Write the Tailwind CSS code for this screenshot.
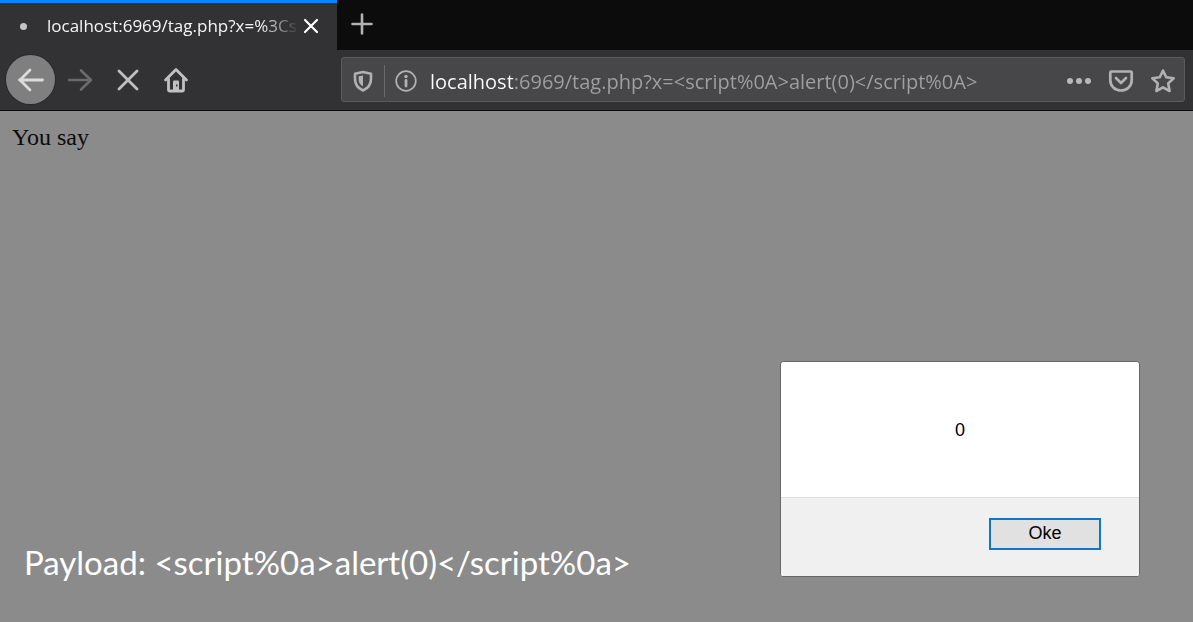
<!doctype html>
<html lang="en">
<head>
  <meta charset="UTF-8">
  <meta name="viewport" content="width=device-width, initial-scale=1.0">
  <title>localhost:6969/tag.php</title>
  <script src="https://cdn.jsdelivr.net/npm/@tailwindcss/browser@4"></script>
</head>
<body class="flex min-h-screen flex-col bg-[#8b8b8b] font-['Open_Sans','Noto_Sans',sans-serif]">
    <header class="border-b border-[#0c0c0d] bg-[#323234]">
        <!-- tab strip -->
        <div class="flex h-[50px] bg-[#0c0c0d]">
            <div class="flex w-[337px] items-center border-t-3 border-[#0a84ff] bg-[#323234] pb-px pl-5 pr-[17px]">
                <span class="size-[7px] shrink-0 rounded-full bg-[#c4c4c5]"></span>
                <span class="ml-5 flex-1 overflow-hidden whitespace-nowrap text-[17px] leading-6 text-[#f5f5f6] mask-r-from-[214px] mask-r-to-[252px]">localhost:6969/tag.php?x=%3Cs</span>
                <button type="button" aria-label="Close tab" class="shrink-0">
                    <svg class="size-[18px]" viewBox="0 0 18 18" fill="none" stroke="#fff" stroke-width="2.2" stroke-linecap="round"><path d="M3 3l12 12M15 3L3 15"/></svg>
                </button>
            </div>
            <button type="button" aria-label="New tab" class="ml-[13px] flex items-center pb-0.5">
                <svg class="size-6" viewBox="0 0 24 24" fill="none" stroke="#b1b1b3" stroke-width="2.6" stroke-linecap="round"><path d="M12 2.5v19M2.5 12h19"/></svg>
            </button>
        </div>

        <!-- toolbar -->
        <div class="flex h-[60px] items-center pb-px pl-[6px] pr-2">
            <button type="button" aria-label="Back" class="flex size-[49px] items-center justify-center rounded-full bg-[#7f7f80] ring-1 ring-[#29292b]">
                <svg class="size-7" viewBox="0 0 28 28" fill="none" stroke="#dcdcdd" stroke-width="2.8" stroke-linecap="round" stroke-linejoin="round"><path d="M2.500 14h23M13 4L3 14l10 10"/></svg>
            </button>
            <button type="button" aria-label="Forward" disabled class="ml-3">
                <svg class="size-[26px]" viewBox="0 0 26 26" fill="none" stroke="#6a6a6c" stroke-width="2.6" stroke-linecap="round" stroke-linejoin="round"><path d="M2 13h22M14 3.500l10 9.500l-10 9.500"/></svg>
            </button>
            <button type="button" aria-label="Stop" class="ml-[22px]">
                <svg class="size-[26px]" viewBox="0 0 26 26" fill="none" stroke="#c0c0c2" stroke-width="2.8" stroke-linecap="round"><path d="M4 4l18 18M22 4L4 22"/></svg>
            </button>
            <button type="button" aria-label="Home" class="ml-[22px]">
                <svg class="size-[26px]" viewBox="0 0 26 26" fill="none" stroke="#c0c0c2" stroke-width="2.8" stroke-linecap="round" stroke-linejoin="round"><path d="M2.500 13L13 2.500L23.500 13"/><path d="M5.500 12v10.500q0 1.500 1.500 1.500h12q1.500 0 1.500-1.500V12"/><path d="M10 23.500V14.500q0-1 1-1h4q1 0 1 1v9z" fill="#c0c0c2" stroke="none"/><path d="M13 17.500h1.500v2H13z" fill="#323234" stroke="none"/></svg>
            </button>

            <div class="ml-[152px] flex h-[45px] flex-1 items-center rounded-[3px] border border-[#5b5b5d] bg-[#474749] pl-[10px] pr-2 pt-0.5">
                <button type="button" aria-label="Tracking protection">
                    <svg class="size-[22px]" viewBox="0 0 22 22"><path d="M11 2L19 3.800V9C19 14.500 16.500 18 11 20.500C5.500 18 3 14.500 3 9V3.800z" fill="none" stroke="#b1b1b3" stroke-width="2.600" stroke-linejoin="round"/><path d="M11 5.500V16.500C8 14.800 6.600 12.500 6.600 9V6.300z" fill="#b1b1b3"/></svg>
                </button>
                <span class="ml-[10px] h-8 w-px bg-[#69696b]"></span>
                <button type="button" aria-label="Site information" class="ml-[9px]">
                    <svg class="size-6" viewBox="0 0 24 24"><circle cx="12" cy="12" r="9.800" fill="none" stroke="#b1b1b3" stroke-width="1.700"/><circle cx="12" cy="7.500" r="1.700" fill="#b1b1b3"/><path d="M12 11.500V17" stroke="#b1b1b3" stroke-width="2.800" stroke-linecap="round"/></svg>
                </button>
                <input type="text" aria-label="Address" spellcheck="false" value="localhost:6969/tag.php?x=&lt;script%0A&gt;alert(0)&lt;/script%0A&gt;" class="ml-3 h-9 min-w-0 flex-1 bg-linear-to-r from-white from-[83px] to-[#a0a0a2] to-[83px] bg-clip-text pt-0.5 text-xl leading-8 text-transparent caret-white outline-none">
                <button type="button" aria-label="Page actions">
                    <svg class="size-[26px]" viewBox="0 0 26 26" fill="#b8b8ba"><circle cx="4" cy="13" r="3"/><circle cx="13" cy="13" r="3"/><circle cx="22" cy="13" r="3"/></svg>
                </button>
                <button type="button" aria-label="Save to Pocket" class="ml-4">
                    <svg class="size-[26px]" viewBox="0 0 26 26" fill="none" stroke="#b1b1b3" stroke-width="2.700" stroke-linecap="round" stroke-linejoin="round"><path d="M3.300 3.500H22.700Q23.700 3.500 23.700 4.500V12C23.700 18.500 18.500 22.500 13 22.500S2.300 18.500 2.300 12V4.500Q2.300 3.500 3.300 3.500z"/><path d="M8 10l5 5l5-5"/></svg>
                </button>
                <button type="button" aria-label="Bookmark this page" class="ml-4">
                    <svg class="size-[26px]" viewBox="0 0 26 26" fill="none" stroke="#b1b1b3" stroke-width="2.600" stroke-linejoin="round"><path d="M13 2.500L16.200 9.200L23.700 10.200L18.200 15.400L19.600 23L13 19.300L6.400 23L7.800 15.400L2.300 10.200L9.800 9.200z"/></svg>
                </button>
            </div>
        </div>
    </header>

    <main class="relative flex flex-1 flex-col justify-between">
        <p class="px-3 py-2 font-['Liberation_Serif',serif] text-2xl leading-9 text-[#0c0c0c]">You say</p>
        <p class="px-6 pb-10 font-['Lato',sans-serif] text-[33px] leading-10 text-white">Payload: &lt;script%0a&gt;alert(0)&lt;/script%0a&gt;</p>

        <!-- alert box -->
        <div role="alertdialog" aria-label="Alert" class="absolute bottom-[45px] right-[53px] w-[360px] overflow-hidden rounded-[3px] border border-[#666] bg-white font-['Liberation_Sans',sans-serif] text-lg leading-6 text-black">
            <p class="pb-[55px] pt-14 text-center">0</p>
            <div class="flex justify-end border-t border-[#dfdfdf] bg-[#f0f0f0] pb-[26px] pr-[38px] pt-5">
                <button type="button" class="h-8 w-28 border-2 border-[#1176c8] bg-[#e1e1e1] pb-0.5 leading-6">Oke</button>
            </div>
        </div>
    </main>
</body>
</html>
